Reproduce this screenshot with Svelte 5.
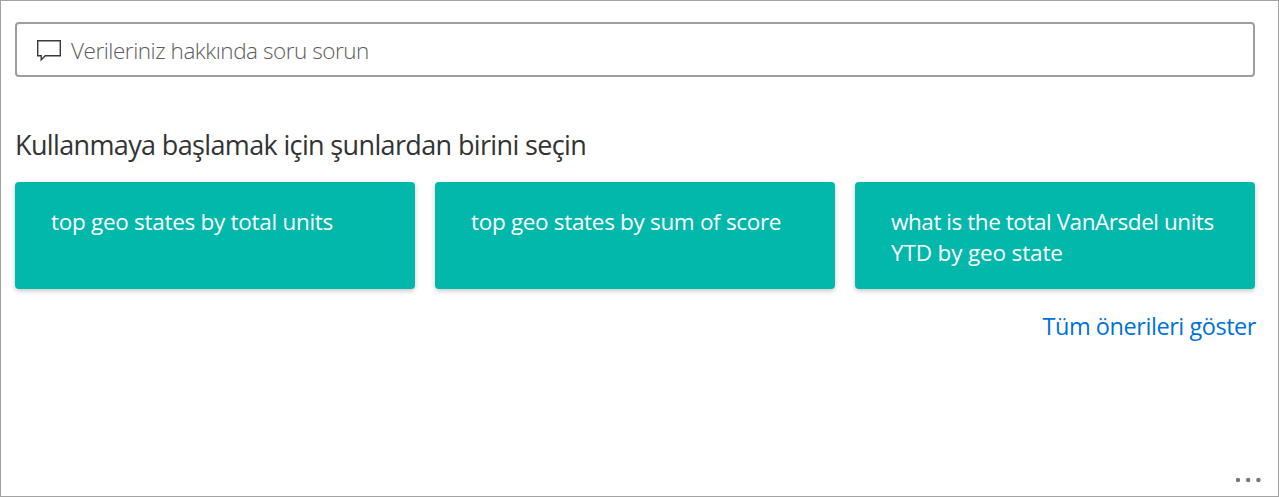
<script>
  const suggestions = [
    { text: 'top geo states by total units', tone: 'units' },
    { text: 'top geo states by sum of score', tone: 'score' },
    { text: 'what is the total VanArsdel units YTD by geo state', tone: 'ytd' }
  ];
</script>

<main class="panel">
  <div class="ask">
    <svg class="bubble" width="26" height="24" viewBox="0 0 26 24" aria-hidden="true">
      <path d="M1.7 2.7H24.3V17.7H9.3L5.2 21.8V17.7H1.7Z" />
    </svg>
    <span class="placeholder">Verileriniz hakkında soru sorun</span>
  </div>

  <h1>Kullanmaya başlamak için şunlardan birini seçin</h1>

  <div class="cards">
    {#each suggestions as item}
      <button class="card"><span class={item.tone}>{item.text}</span></button>
    {/each}
  </div>

  <a class="all" href="#all"><span>Tüm önerileri göster</span></a>

  <svg class="more" width="28" height="6" viewBox="0 0 28 6" aria-hidden="true">
    <circle cx="4" cy="3" r="2.2" />
    <circle cx="14.2" cy="3" r="2.2" />
    <circle cx="24.4" cy="3" r="2.2" />
  </svg>
</main>

<style>
  :global(body) {
    margin: 0;
    background: #fff;
  }

  .panel {
    box-sizing: border-box;
    width: 1279px;
    height: 497px;
    padding: 21px 23px 0 14px;
    border: 1px solid #a3a3a3;
    display: flex;
    flex-direction: column;
    font-family: 'Segoe UI', 'Open Sans', 'Noto Sans', sans-serif;
    overflow: hidden;
  }

  .ask {
    box-sizing: border-box;
    height: 55px;
    flex: none;
    border: 2px solid #9e9e9e;
    border-radius: 4px;
    display: flex;
    align-items: center;
    padding-left: 19px;
    gap: 9px;
  }

  .bubble {
    flex: none;
    fill: none;
    stroke: #3b3b3b;
    stroke-width: 1.4;
  }

  .placeholder {
    padding-top: 2px;
    font-size: 22.5px;
    font-weight: 300;
    letter-spacing: -0.46px;
    color: #5c5c5c;
    line-height: 30px;
    white-space: nowrap;
  }

  h1 {
    margin: 48px 0 0;
    font-size: 27px;
    font-weight: 370;
    letter-spacing: -0.64px;
    line-height: 40px;
    height: 40px;
    color: #333;
    white-space: nowrap;
  }

  .cards {
    margin-top: 17px;
    display: grid;
    grid-template-columns: repeat(3, 400px);
    gap: 20px;
  }

  .card {
    height: 107px;
    padding: 24px 32px 0 36px;
    border: 0;
    border-radius: 4px;
    background: #01b8aa;
    box-shadow: 0 2px 5px rgba(0, 0, 0, 0.22);
    display: flex;
    align-items: flex-start;
    text-align: left;
    font-family: inherit;
    font-size: 22.5px;
    letter-spacing: -0.29px;
    line-height: 31px;
    color: #fff;
  }

  .score {
    letter-spacing: -0.32px;
  }

  .ytd {
    display: block;
    letter-spacing: -0.15px;
  }

  .ytd::first-line {
    letter-spacing: -0.45px;
  }

  .all {
    align-self: flex-end;
    margin: 20px -1px 0 0;
    font-size: 23.5px;
    letter-spacing: -0.45px;
    line-height: 34px;
    color: #0072d6;
    text-decoration: none;
    white-space: nowrap;
  }

  .more {
    align-self: flex-end;
    margin: auto -7px 13px 0;
    fill: #777;
    flex: none;
  }
</style>
